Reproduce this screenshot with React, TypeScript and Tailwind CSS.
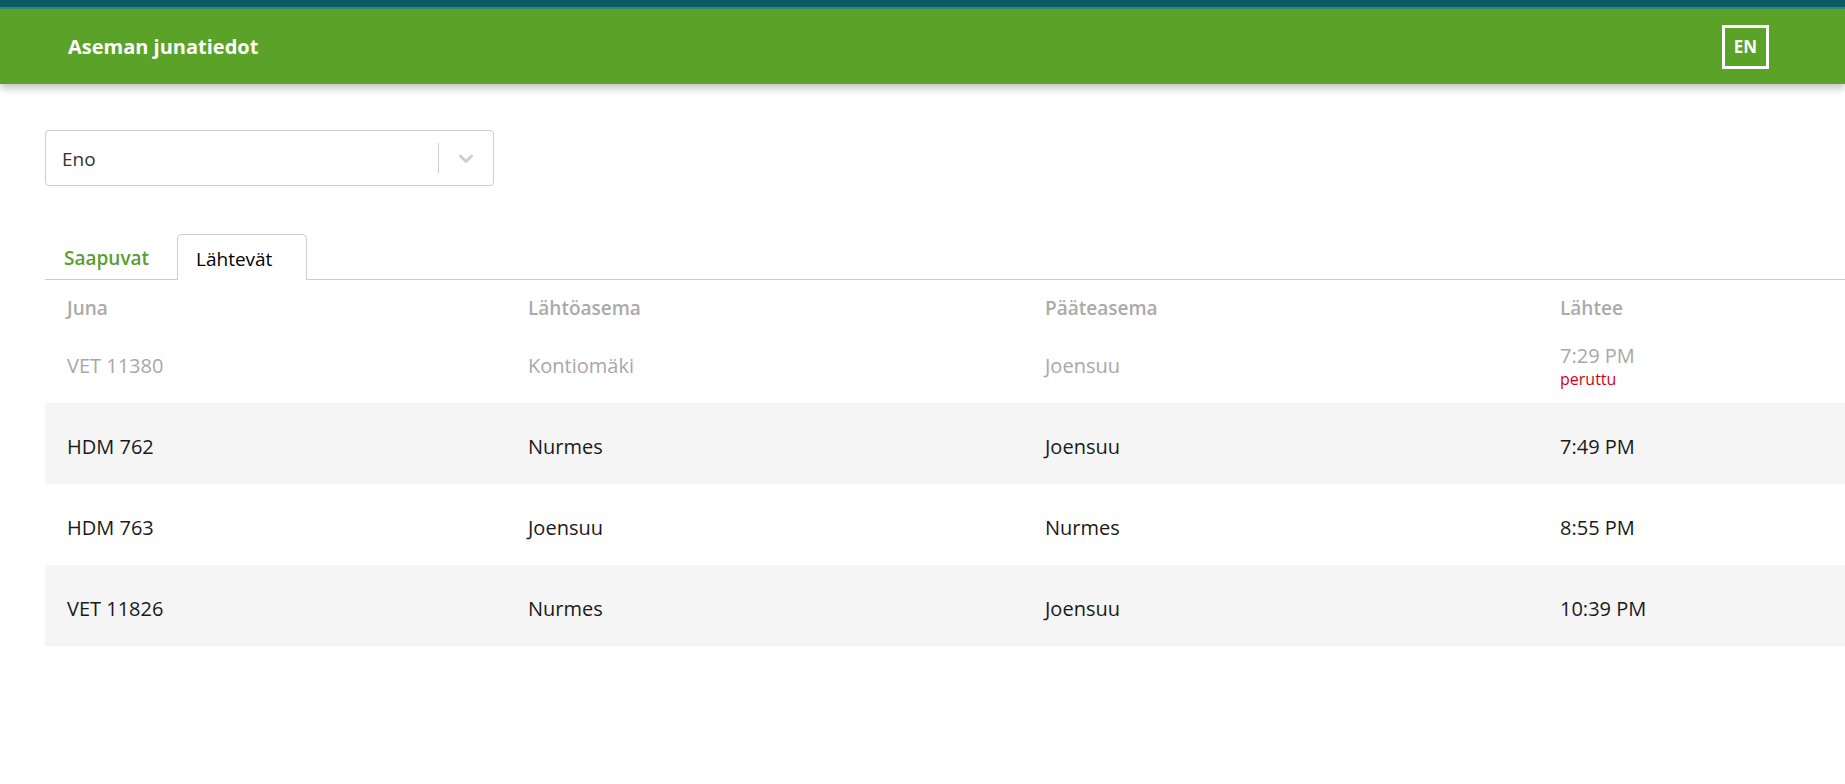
import { FC } from "react";

type Row = {
  train: string;
  from: string;
  to: string;
  time: string;
  cancelled?: boolean;
};

const rows: Row[] = [
  { train: "VET 11380", from: "Kontiomäki", to: "Joensuu", time: "7:29 PM", cancelled: true },
  { train: "HDM 762", from: "Nurmes", to: "Joensuu", time: "7:49 PM" },
  { train: "HDM 763", from: "Joensuu", to: "Nurmes", time: "8:55 PM" },
  { train: "VET 11826", from: "Nurmes", to: "Joensuu", time: "10:39 PM" },
];

const cols = "grid grid-cols-[483px_517px_515px_1fr]";

const Header: FC = () => (
  <div className="relative z-10 shadow-[0_4px_8px_rgba(0,0,0,0.25)]">
    <div className="h-[7px] bg-[#0b5a66]" />
    <div className="h-[2px] bg-[#3b8664]" />
    <div className="flex h-[75px] items-center justify-between bg-[#5aa228] pl-[68px] pr-[76px]">
      <h1 className="text-[20px] font-bold text-white">Aseman junatiedot</h1>
      <button className="flex h-[44px] w-[47px] items-center justify-center border-[3px] border-white text-[17px] font-bold text-white">
        EN
      </button>
    </div>
  </div>
);

const StationSelect: FC = () => (
  <div className="flex h-[56px] w-[449px] items-center rounded-[4px] border border-[#cccccc] bg-white">
    <span className="flex-1 pl-[16px] pt-[3px] text-[19px] text-[#333333]">Eno</span>
    <span className="h-[30px] w-px bg-[#cccccc]" />
    <span className="flex w-[54px] items-center justify-center">
      <svg width="24" height="24" viewBox="0 0 20 20" fill="#cccccc">
        <path d="M4.516 7.548c.436-.446 1.043-.481 1.576 0L10 11.295l3.908-3.747c.533-.481 1.141-.446 1.574 0 .436.445.408 1.197 0 1.615-.406.418-4.695 4.502-4.695 4.502a1.095 1.095 0 0 1-1.576 0S4.924 9.581 4.516 9.163c-.409-.418-.436-1.17 0-1.615z" />
      </svg>
    </span>
  </div>
);

const Tabs: FC = () => (
  <div className="flex h-[46px] items-stretch border-b border-[#cccccc]">
    <div className="flex w-[132px] items-center pl-[19px] pt-[4px] text-[19px] font-semibold text-[#5a9e32]">
      Saapuvat
    </div>
    <div className="-mb-px flex w-[130px] items-center rounded-t-[5px] border border-b-0 border-[#cccccc] bg-white pl-[18px] pt-[4px] text-[19px] text-black">
      Lähtevät
    </div>
  </div>
);

const App: FC = () => (
  <div className="min-h-screen overflow-hidden bg-white font-['Open_Sans',sans-serif]">
    <Header />
    <main className="pl-[45px] pt-[46px]">
      <StationSelect />
      <div className="mt-[48px]">
        <Tabs />
        <div className={`${cols} h-[42px] items-end text-[19px] font-semibold text-[#aaaaaa]`}>
          <div className="pl-[22px]">Juna</div>
          <div>Lähtöasema</div>
          <div>Pääteasema</div>
          <div>Lähtee</div>
        </div>
        {rows.map((r, i) => (
          <div
            key={r.train}
            className={`${cols} h-[81px] items-center pt-[6px] text-[20px] ${
              i % 2 === 1 ? "bg-[#f5f5f5]" : "bg-white"
            } ${r.cancelled ? "text-[#a8a8a8]" : "text-[#1a1a1a]"}`}
          >
            <div className="pl-[22px]">{r.train}</div>
            <div>{r.from}</div>
            <div>{r.to}</div>
            <div className="flex flex-col">
              <span className="leading-[26px]">{r.time}</span>
              {r.cancelled && <span className="text-[16px] leading-[20px] text-[#d0021b]">peruttu</span>}
            </div>
          </div>
        ))}
      </div>
    </main>
  </div>
);

export default App;
